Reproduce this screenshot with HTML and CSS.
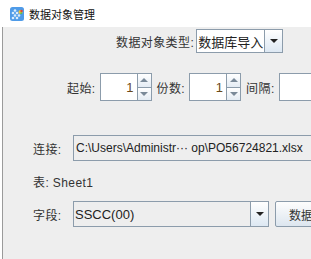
FILE: index.html
```html
<!DOCTYPE html>
<html lang="zh-CN">

<head>
    <meta charset="UTF-8">
    <meta name="viewport" content="width=device-width, initial-scale=1.0">
    <title>数据对象管理</title>
    <link rel="stylesheet" href="styles.css">
</head>

<body>
    <div class="titlebar">
        <svg class="app-icon" width="14" height="14" viewBox="0 0 14 14">
            <rect x="0" y="0" width="14" height="14" rx="2.5" fill="#4f9be8"/>
            <circle cx="5" cy="3.5" r="1.3" fill="#d8ebfb"/>
            <circle cx="3" cy="6" r="1.3" fill="#d8ebfb"/>
            <circle cx="7" cy="6" r="1.3" fill="#d8ebfb"/>
            <circle cx="5" cy="8.5" r="1.3" fill="#d8ebfb"/>
            <circle cx="3" cy="11" r="1.3" fill="#d8ebfb"/>
            <circle cx="7" cy="11" r="1.3" fill="#d8ebfb"/>
            <circle cx="9" cy="8.5" r="1.3" fill="#d8ebfb"/>
            <circle cx="10.5" cy="5" r="2" fill="#f0c03a"/>
            <circle cx="11.5" cy="4" r="1.2" fill="#e0453a"/>
            <circle cx="11.2" cy="6.3" r="1" fill="#5cbf4a"/>
        </svg>
        <span class="title">数据对象管理</span>
    </div>

    <div class="dialog">
        <div class="row row-type">
            <span class="label">数据对象类型:</span>
            <div class="combo combo-type">
                <div class="combo-field white">数据库导入</div>
                <div class="combo-btn"><span class="tri"></span></div>
            </div>
        </div>

        <div class="row row-spin">
            <span class="label">起始:</span>
            <div class="spinner">
                <div class="spin-field">1</div>
                <div class="spin-btns">
                    <div class="spin-btn"><span class="tri-up"></span></div>
                    <div class="spin-btn"><span class="tri-down"></span></div>
                </div>
            </div>
            <span class="label">份数:</span>
            <div class="spinner">
                <div class="spin-field">1</div>
                <div class="spin-btns">
                    <div class="spin-btn"><span class="tri-up"></span></div>
                    <div class="spin-btn"><span class="tri-down"></span></div>
                </div>
            </div>
            <span class="label">间隔:</span>
            <div class="spin-field wide"></div>
        </div>

        <div class="row row-conn">
            <span class="label">连接:</span>
            <div class="text-field">C:\Users\Administr··· op\PO56724821.xlsx</div>
        </div>

        <div class="row row-sheet">
            <span class="label">表: Sheet1</span>
        </div>

        <div class="row row-field">
            <span class="label">字段:</span>
            <div class="combo combo-field-sel">
                <div class="combo-field">SSCC(00)</div>
                <div class="combo-btn"><span class="tri"></span></div>
            </div>
            <div class="button">数据...</div>
        </div>
    </div>
</body>

</html>
```

FILE: styles.css
```css
body {
    margin: 0;
    width: 311px;
    height: 259px;
    overflow: hidden;
    background-color: #ffffff;
    font-family: "Liberation Sans", "Noto Sans CJK SC", sans-serif;
    font-size: 12px;
    color: #333333;
}

/* Window title */
.titlebar {
    height: 27px;
    display: flex;
    align-items: center;
    background-color: #ffffff;
}

.app-icon {
    margin-left: 10px;
    margin-right: 5px;
}

.title {
    font-family: "Noto Sans CJK SC", sans-serif;
    font-size: 11px;
    color: #111111;
}

/* Dialog body */
.dialog {
    margin-left: 2px;
    height: 232px;
    border-left: 1px solid #9a9a9a;
    background-color: #eeeeee;
    overflow: hidden;
}

.row {
    display: flex;
    align-items: center;
    white-space: nowrap;
}

.row > * {
    flex-shrink: 0;
}

.label {
    font-family: "Liberation Sans", "Noto Sans CJK SC", sans-serif;
    font-size: 12px;
    letter-spacing: 0.4px;
    color: #333333;
}

.row-type {
    margin-top: 2px;
    height: 24px;
    padding-left: 113px;
}

.row-type .label {
    margin-right: 2px;
}

.row-spin {
    margin-top: 20px;
    height: 28px;
    padding-left: 64px;
}

.row-spin .label {
    margin-right: 4px;
}

.row-conn {
    margin-top: 34px;
    height: 26px;
    padding-left: 30px;
}

.row-sheet {
    margin-top: 12px;
    height: 16px;
    padding-left: 30px;
}

.row-field {
    margin-top: 12px;
    height: 26px;
    padding-left: 30px;
}

.row-conn .label,
.row-field .label {
    width: 40px;
}

/* Combo boxes */
.combo {
    display: flex;
    height: 100%;
    box-sizing: border-box;
    border: 1px solid #8c9cab;
}

.combo-type {
    width: 87px;
}

.combo-field-sel {
    width: 196px;
}

.combo-field {
    flex: 1;
    display: flex;
    align-items: center;
    padding-left: 1px;
    font-size: 13px;
    color: #222222;
    background-color: #eeeeee;
    border-right: 1px solid #8c9cab;
}

.combo-field.white {
    background-color: #ffffff;
    font-family: "Noto Sans CJK SC", sans-serif;
}

.combo-btn {
    width: 17px;
    display: flex;
    align-items: center;
    justify-content: center;
    background: linear-gradient(#ffffff, #dde8f3);
}

.tri {
    width: 0;
    height: 0;
    border-left: 4px solid transparent;
    border-right: 4px solid transparent;
    border-top: 4px solid #222222;
}

/* Spinners */
.spinner {
    display: flex;
    height: 100%;
    margin-right: 5px;
}

.spin-field {
    width: 38px;
    box-sizing: border-box;
    height: 100%;
    border: 1px solid #8c9cab;
    background-color: #ffffff;
    display: flex;
    align-items: center;
    justify-content: flex-end;
    padding-right: 3px;
    font-size: 13px;
    color: #6b4a1a;
}

.spin-field.wide {
    width: 60px;
}

.spin-btns {
    width: 14px;
    display: flex;
    flex-direction: column;
    box-sizing: border-box;
    border: 1px solid #8c9cab;
    border-left: none;
}

.spin-btn {
    flex: 1;
    display: flex;
    align-items: center;
    justify-content: center;
    background: linear-gradient(#ffffff, #e4ecf4);
}

.spin-btn + .spin-btn {
    border-top: 1px solid #8c9cab;
}

.tri-up {
    width: 0;
    height: 0;
    border-left: 4px solid transparent;
    border-right: 4px solid transparent;
    border-bottom: 4px solid #7a8a99;
}

.tri-down {
    width: 0;
    height: 0;
    border-left: 4px solid transparent;
    border-right: 4px solid transparent;
    border-top: 4px solid #7a8a99;
}

/* Connection text field */
.text-field {
    width: 260px;
    height: 100%;
    box-sizing: border-box;
    border: 1px solid #8c9cab;
    background-color: #eeeeee;
    display: flex;
    align-items: center;
    padding-left: 2px;
    font-size: 12px;
    color: #222222;
}

/* Button */
.button {
    margin-left: 6px;
    width: 60px;
    height: 100%;
    box-sizing: border-box;
    border: 1px solid #8c9cab;
    border-radius: 2px;
    background: linear-gradient(#fdfdfd, #dde6ef);
    display: flex;
    align-items: center;
    padding-left: 13px;
    font-family: "Noto Sans CJK SC", sans-serif;
    font-size: 12px;
    color: #333333;
}
```
